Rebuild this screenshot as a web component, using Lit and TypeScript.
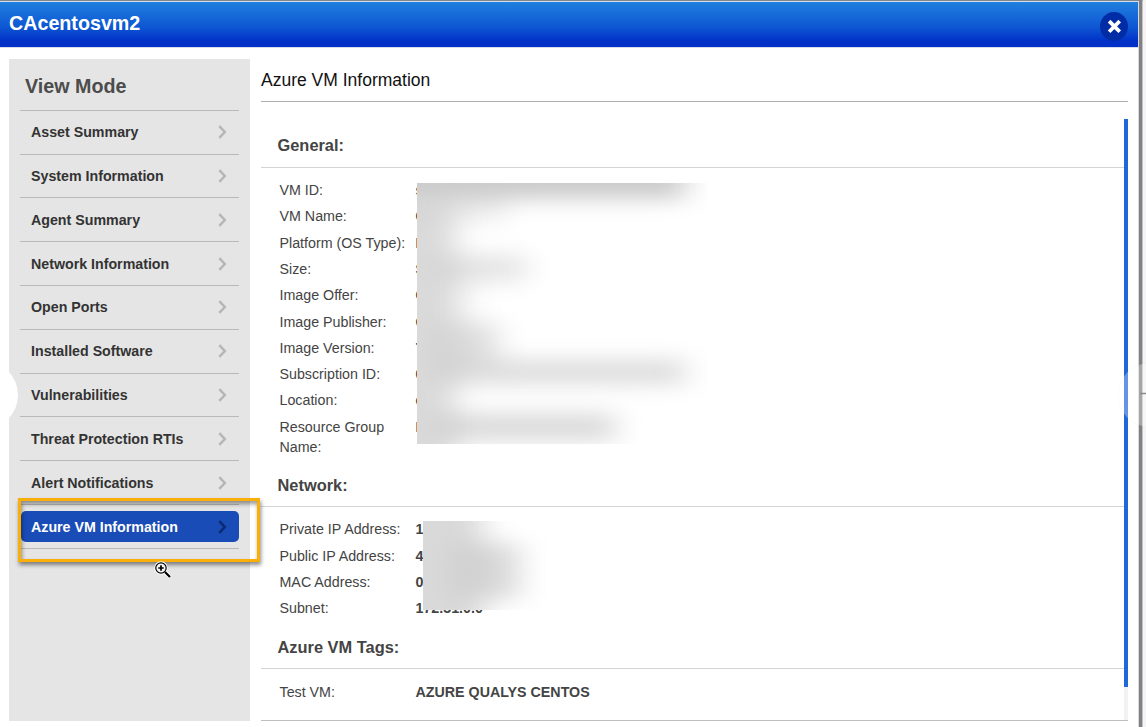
import { LitElement, html, css, svg } from "lit";
import { customElement, property } from "lit/decorators.js";

interface Row { label: string; value: string; }

const NAV = [
  "Asset Summary", "System Information", "Agent Summary", "Network Information",
  "Open Ports", "Installed Software", "Vulnerabilities", "Threat Protection RTIs",
  "Alert Notifications", "Azure VM Information",
];

const GENERAL: Row[] = [
  { label: "VM ID:", value: "s" },
  { label: "VM Name:", value: "C" },
  { label: "Platform (OS Type):", value: "L" },
  { label: "Size:", value: "S" },
  { label: "Image Offer:", value: "C" },
  { label: "Image Publisher:", value: "O" },
  { label: "Image Version:", value: "7" },
  { label: "Subscription ID:", value: "0" },
  { label: "Location:", value: "e" },
  { label: "Resource Group Name:", value: "L" },
];

const NETWORK: Row[] = [
  { label: "Private IP Address:", value: "1" },
  { label: "Public IP Address:", value: "4" },
  { label: "MAC Address:", value: "0" },
  { label: "Subnet:", value: "172.31.0.0" },
];

const TAGS: Row[] = [{ label: "Test VM:", value: "AZURE QUALYS CENTOS" }];

@customElement("nav-list")
class NavList extends LitElement {
  static styles = css`
    :host { display: block; }
    .title { height: 50.8px; box-sizing: border-box; padding: 16px 0 0 5px; font-size: 19.7px; line-height: 23px; font-weight: 700; color: #4c4c4c; }
    .item { height: 43.82px; box-sizing: border-box; border-top: 1px solid #b9b9b9; display: flex; align-items: center; font-size: 14.23px; font-weight: 700; color: #333; }
    .label { flex: 1; display: flex; align-items: center; justify-content: space-between; height: 31px; padding: 0 12px 0 11px; border-radius: 5px; }
    .active .label { background: #194cb6; color: #fff; margin-left: 1px; padding-left: 10px; }
    .end { border-top: 1px solid #b9b9b9; }
    svg { display: block; }
  `;
  render() {
    return html`
      <div class="title">View Mode</div>
      ${NAV.map((name, i) => {
        const active = i === NAV.length - 1;
        return html`<div class="item ${active ? "active" : ""}">
          <div class="label"><span>${name}</span>
            <svg width="9" height="14" viewBox="0 0 9 14"><path d="M1.3 1.2 6.8 7 1.3 12.8" fill="none" stroke=${active ? "#0b2a70" : "#b6b6b6"} stroke-width="2.5"/></svg>
          </div></div>`;
      })}
      <div class="end"></div>`;
  }
}

@customElement("info-section")
class InfoSection extends LitElement {
  @property() heading = "";
  @property({ attribute: false }) rows: Row[] = [];
  static styles = css`
    :host { display: block; }
    .heading { height: 43px; box-sizing: border-box; padding-left: 16.5px; border-bottom: 1px solid #d4d4d4; font-size: 16.4px; line-height: var(--heading-line, 42.2px); font-weight: 700; color: #444; }
    .rows { padding: var(--rows-top, 9px) 0 1px 18.5px; }
    .row { display: grid; grid-template-columns: 136px 1fr; padding: 3.15px 0; font-size: 14.25px; line-height: 20px; color: #444; }
    .name { padding-right: 8px; }
    .value { font-weight: 700; }
  `;
  render() {
    return html`<div class="heading">${this.heading}</div>
      <div class="rows">${this.rows.map((r) => html`
        <div class="row"><span class="name">${r.label}</span><span class="value">${r.value}</span></div>`)}
      </div>`;
  }
}

/* Blurred bands: x, y, width, height, grey level, opacity */
type Band = [number, number, number, number, string, number];
const GENERAL_BANDS: Band[] = [
  [-60, -34, 328, 50, "#c2c2c2", 0.85],
  [-60, 10, 150, 28, "#cccccc", 0.4],
  [-60, 20, 98, 290, "#cccccc", 0.72],
  [20, 71, 88, 28, "#cccccc", 0.5],
  [20, 80, 38, 64, "#cccccc", 0.2],
  [20, 140, 60, 42, "#c8c8c8", 0.6],
  [20, 176, 248, 26, "#c8c8c8", 0.6],
  [20, 230, 178, 28, "#c8c8c8", 0.65],
];
const NETWORK_BANDS: Band[] = [
  [-60, -40, 120, 160, "#cccccc", 0.75],
  [30, 22, 66, 56, "#cccccc", 0.75],
];
const bands = (id: string, w: number, h: number, list: Band[]) => html`
  <svg class="mask" width=${w} height=${h} viewBox="0 0 ${w} ${h}">
    <defs><filter id=${id} x="-100" y="-100" width="600" height="500" filterUnits="userSpaceOnUse" color-interpolation-filters="sRGB"><feGaussianBlur stdDeviation="15 10"/></filter></defs>
    <rect width=${w} height=${h} fill="#fff"/>
    <g filter="url(#${id})">${list.map(([x, y, bw, bh, c, o]) => svg`<rect x=${x} y=${y} width=${bw} height=${bh} fill=${c} opacity=${o}/>`)}</g>
  </svg>`;

@customElement("app-root")
class AppRoot extends LitElement {
  static styles = css`
    :host { display: block; position: relative; width: 1146px; height: 727px; overflow: hidden; background: #f4f4f4; font-family: "Liberation Sans", Arial, sans-serif; }
    .window { width: 1143px; height: 727px; box-sizing: border-box; border-top: 1px solid #858585; border-right: 1px solid #c4c4c4; background: #fff; display: flex; }
    .panel { width: 1138px; border-right: 1px solid #d9d9d9; }
    .edge { width: 3px; background: #808085; }
    .header { height: 46px; box-sizing: border-box; border-top: 1px solid #cfe0f2; background: linear-gradient(#217fdf, #0e57d3 55%, #0030c8 88%) padding-box; display: flex; justify-content: space-between; padding: 0 10px 0 9px; box-shadow: 0 1px 0 #d6dcec; }
    .name { color: #fff; font-size: 19.7px; line-height: 43px; font-weight: 700; }
    .close { width: 28px; height: 29px; margin-top: 10px; display: block; }
    .body { display: flex; padding: 12px 10px 0 9px; height: 662px; }
    .side { width: 241px; box-sizing: border-box; padding: 0 11px; background: #e5e5e5; }
    .main { flex: 1; margin-left: 11px; display: flex; flex-direction: column; }
    .title { height: 43px; box-sizing: border-box; border-bottom: 1px solid #aeaeae; font-size: 17.5px; line-height: 43px; color: #111; }
    .scroll { margin-top: 17px; flex: 1; display: flex; border-bottom: 1px solid #bfbfbf; }
    .sections { flex: 1; display: flex; flex-direction: column; gap: 3.5px; padding-top: 6px; height: 580px; }
    .track { width: 4px; background: #f2f2f2; }
    .thumb { height: 568px; background: #2067d8; }
    .masked { position: relative; }
    .mask { position: absolute; }
    .general { --heading-line: 41.6px; }
    .tags { --rows-top: 10px; }
    .general .mask { left: 156px; top: 58px; }
    .network .mask { left: 162px; top: 57px; }
    .callout { position: absolute; left: 18px; top: 498px; width: 236px; height: 58px; border: 3px solid #faae0a; box-shadow: 1px 3px 4px rgba(0,0,0,.45), inset 1px 3px 4px rgba(0,0,0,.4); }
    .knobs { position: absolute; left: 0; top: 0; pointer-events: none; }
    .cursor { position: absolute; left: 154px; top: 561px; }
  `;
  render() {
    return html`
      <div class="window">
        <div class="panel">
          <div class="header">
            <span class="name">CAcentosvm2</span>
            <svg class="close" viewBox="0 0 28 29"><ellipse cx="14" cy="14.5" rx="14" ry="14.5" fill="#002da6"/><path d="M10.4 10.4 18.4 18.4M18.4 10.4 10.4 18.4" stroke="#fff" stroke-width="3.7" stroke-linecap="square" stroke-linejoin="round"/></svg>
          </div>
          <div class="body">
            <div class="side"><nav-list></nav-list></div>
            <div class="main">
              <div class="title">Azure VM Information</div>
              <div class="scroll">
                <div class="sections">
                  <div class="masked general"><info-section heading="General:" .rows=${GENERAL}></info-section>${bands("g", 290, 261, GENERAL_BANDS)}</div>
                  <div class="masked network"><info-section heading="Network:" .rows=${NETWORK}></info-section>${bands("n", 124, 89, NETWORK_BANDS)}</div>
                  <info-section class="tags" heading="Azure VM Tags:" .rows=${TAGS}></info-section>
                </div>
                <div class="track"><div class="thumb"></div></div>
              </div>
            </div>
          </div>
        </div>
        <div class="edge"></div>
      </div>
      <svg class="knobs" width="1146" height="727">
        <circle cx="-16" cy="395" r="34" fill="#fff"/>
        <circle cx="1150" cy="395" r="32" fill="#fff" fill-opacity=".3" stroke="#000" stroke-opacity=".02"/>
        <path d="M1140 393.5h6" stroke="#8a8a8a" stroke-width="1.5"/>
      </svg>
      <div class="callout"></div>
      <svg class="cursor" width="18" height="18" viewBox="0 0 18 18">
        <path d="M11 11 16 16" stroke="#fff" stroke-width="4"/>
        <circle cx="7" cy="7" r="5.2" fill="#fff" stroke="#fff" stroke-width="3"/>
        <circle cx="7" cy="7" r="5.2" fill="#f4f4f4" stroke="#000" stroke-width="1.2"/>
        <path d="M4.3 7h5.4M7 4.3v5.4" stroke="#000" stroke-width="1.7"/>
        <path d="M11 11 16 16" stroke="#000" stroke-width="2.2"/>
      </svg>`;
  }
}
